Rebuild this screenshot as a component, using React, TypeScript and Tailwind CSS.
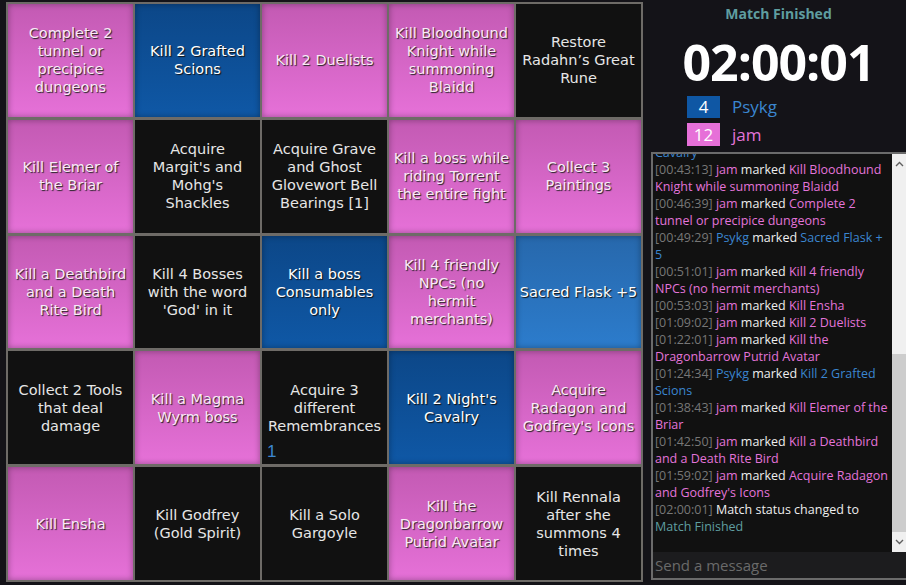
import React from "react";

type Kind = "pink" | "blue" | "sky" | "black";

const cells: { kind: Kind; lines: string[]; count?: string }[] = [
  { kind: "pink", lines: ["Complete 2", "tunnel or", "precipice", "dungeons"] },
  { kind: "blue", lines: ["Kill 2 Grafted", "Scions"] },
  { kind: "pink", lines: ["Kill 2 Duelists"] },
  { kind: "pink", lines: ["Kill Bloodhound", "Knight while", "summoning", "Blaidd"] },
  { kind: "black", lines: ["Restore", "Radahn\u2019s Great", "Rune"] },
  { kind: "pink", lines: ["Kill Elemer of", "the Briar"] },
  { kind: "black", lines: ["Acquire", "Margit's and", "Mohg's", "Shackles"] },
  { kind: "black", lines: ["Acquire Grave", "and Ghost", "Glovewort Bell", "Bearings [1]"] },
  { kind: "pink", lines: ["Kill a boss while", "riding Torrent", "the entire fight"] },
  { kind: "pink", lines: ["Collect 3", "Paintings"] },
  { kind: "pink", lines: ["Kill a Deathbird", "and a Death", "Rite Bird"] },
  { kind: "black", lines: ["Kill 4 Bosses", "with the word", "'God' in it"] },
  { kind: "blue", lines: ["Kill a boss", "Consumables", "only"] },
  { kind: "pink", lines: ["Kill 4 friendly", "NPCs (no", "hermit", "merchants)"] },
  { kind: "sky", lines: ["Sacred Flask +5"] },
  { kind: "black", lines: ["Collect 2 Tools", "that deal", "damage"] },
  { kind: "pink", lines: ["Kill a Magma", "Wyrm boss"] },
  { kind: "black", lines: ["Acquire 3", "different", "Remembrances"], count: "1" },
  { kind: "blue", lines: ["Kill 2 Night's", "Cavalry"] },
  { kind: "pink", lines: ["Acquire", "Radagon and", "Godfrey's Icons"] },
  { kind: "pink", lines: ["Kill Ensha"] },
  { kind: "black", lines: ["Kill Godfrey", "(Gold Spirit)"] },
  { kind: "black", lines: ["Kill a Solo", "Gargoyle"] },
  { kind: "pink", lines: ["Kill the", "Dragonbarrow", "Putrid Avatar"] },
  { kind: "black", lines: ["Kill Rennala", "after she", "summons 4", "times"] },
];

const kindClass: Record<Kind, string> = {
  pink: "bg-gradient-to-b from-[#c35ab3] to-[#e671d8] text-[#fbe9f8] [text-shadow:1px_1px_1px_#222] shadow-[inset_0_0_6px_rgba(0,0,0,0.35)]",
  blue: "bg-gradient-to-b from-[#0c4788] to-[#0f58a6] text-white [text-shadow:1px_1px_1px_#111] shadow-[inset_0_0_6px_rgba(0,0,0,0.35)]",
  sky: "bg-gradient-to-b from-[#2768ac] to-[#2c7ccc] text-white [text-shadow:1px_1px_1px_#111] shadow-[inset_0_0_6px_rgba(0,0,0,0.35)]",
  black: "bg-[#111111] text-[#e6e6e6]",
};

type Msg = { time: string; who?: "jam" | "Psykg"; first: string; rest?: string };

const messages: Msg[] = [
  { time: "[00:39:40]", who: "Psykg", first: "Kill 2 Night's", rest: "Cavalry" },
  { time: "[00:43:13]", who: "jam", first: "Kill Bloodhound", rest: "Knight while summoning Blaidd" },
  { time: "[00:46:39]", who: "jam", first: "Complete 2", rest: "tunnel or precipice dungeons" },
  { time: "[00:49:29]", who: "Psykg", first: "Sacred Flask +", rest: "5" },
  { time: "[00:51:01]", who: "jam", first: "Kill 4 friendly", rest: "NPCs (no hermit merchants)" },
  { time: "[00:53:03]", who: "jam", first: "Kill Ensha" },
  { time: "[01:09:02]", who: "jam", first: "Kill 2 Duelists" },
  { time: "[01:22:01]", who: "jam", first: "Kill the", rest: "Dragonbarrow Putrid Avatar" },
  { time: "[01:24:34]", who: "Psykg", first: "Kill 2 Grafted", rest: "Scions" },
  { time: "[01:38:43]", who: "jam", first: "Kill Elemer of the", rest: "Briar" },
  { time: "[01:42:50]", who: "jam", first: "Kill a Deathbird", rest: "and a Death Rite Bird" },
  { time: "[01:59:02]", who: "jam", first: "Acquire Radagon", rest: "and Godfrey's Icons" },
];

function ChatLine({ m }: { m: Msg }) {
  const color = m.who === "jam" ? "text-[#e374d9]" : "text-[#3b86d0]";
  return (
    <div className="whitespace-nowrap">
      <span className="text-[#777777]">{m.time}</span>{" "}
      <span className={color}>{m.who}</span>{" "}
      <span className="text-[#eeeeee]">marked</span>{" "}
      <span className={color}>{m.first}</span>
      {m.rest && (
        <>
          <br />
          <span className={color}>{m.rest}</span>
        </>
      )}
    </div>
  );
}

export default function App() {
  return (
    <div className="w-[906px] h-[585px] bg-[#141318] flex overflow-hidden">
      <div className="ml-[6px] mt-[2px] w-[637px] h-[580px] grid grid-cols-5 grid-rows-5 gap-x-[2px] gap-y-[3px] p-[2px] bg-[#6e6b67] font-['DejaVu_Sans',sans-serif] text-[14.5px] leading-[18px]">
        {cells.map((c, i) => (
          <div
            key={i}
            className={`relative flex flex-col items-center justify-center text-center whitespace-nowrap ${kindClass[c.kind]}`}
          >
            {c.lines.map((l, j) => (
              <div key={j}>{l}</div>
            ))}
            {c.count && (
              <span className="absolute left-[5px] bottom-[3px] text-[#3b86d0] text-[17px] font-['Liberation_Sans',sans-serif]">
                {c.count}
              </span>
            )}
          </div>
        ))}
      </div>

      <div className="ml-[8px] flex-1 flex flex-col font-['Open_Sans',sans-serif]">
        <div className="shrink-0 mt-[4px] text-center text-[14px] font-bold leading-[20px] text-[#5f9ea0]">
          Match Finished
        </div>
        <div className="shrink-0 mt-[10px] text-center text-[50px] font-bold leading-[56px] text-white tracking-[-1px]">
          02:00:01
        </div>
        <div className="shrink-0 mt-[6px] ml-[36px] flex flex-col gap-[5px] text-[17px]">
          <div className="flex items-center gap-[12px] h-[22px]">
            <div className="w-[33px] h-[22px] leading-[22px] bg-[#0f57a4] text-white text-center">4</div>
            <span className="leading-[22px] text-[#3b86d0]">Psykg</span>
          </div>
          <div className="flex items-center gap-[12px] h-[23px]">
            <div className="w-[33px] h-[23px] leading-[23px] bg-[#e670d8] text-white text-center">12</div>
            <span className="leading-[23px] text-[#e374d9]">jam</span>
          </div>
        </div>

        <div className="shrink-0 mt-[6px] h-[428px] flex flex-col border-l-2 border-t-2 border-b-2 border-[#6b6b6b] bg-[#111111]">
          <div className="flex-1 flex min-h-0">
            <div className="flex-1 overflow-hidden flex flex-col justify-end pl-[2px] pb-[17px] text-[12.5px] leading-[17px]">
              {messages.map((m, i) => (
                <ChatLine key={i} m={m} />
              ))}
              <div className="whitespace-nowrap">
                <span className="text-[#777777]">[02:00:01]</span>{" "}
                <span className="text-[#eeeeee]">Match status changed to</span>
                <br />
                <span className="text-[#5f9ea0]">Match Finished</span>
              </div>
            </div>
            <div className="w-[14px] bg-[#f0f0f0] flex flex-col items-center">
              <svg width="9" height="6" viewBox="0 0 9 6" className="mt-[7px]">
                <path d="M1 5 L4.5 1.5 L8 5" stroke="#606060" strokeWidth="1.4" fill="none" />
              </svg>
              <div className="flex-1" />
              <div className="w-[14px] h-[178px] bg-[#cdcdcd]" />
              <svg width="9" height="6" viewBox="0 0 9 6" className="my-[7px]">
                <path d="M1 1 L4.5 4.5 L8 1" stroke="#606060" strokeWidth="1.4" fill="none" />
              </svg>
            </div>
          </div>
          <div className="h-[26px] bg-[#1c1c1e] flex items-center pl-[2px] text-[15px] text-[#6a6a6a]">
            Send a message
          </div>
        </div>
      </div>
    </div>
  );
}
